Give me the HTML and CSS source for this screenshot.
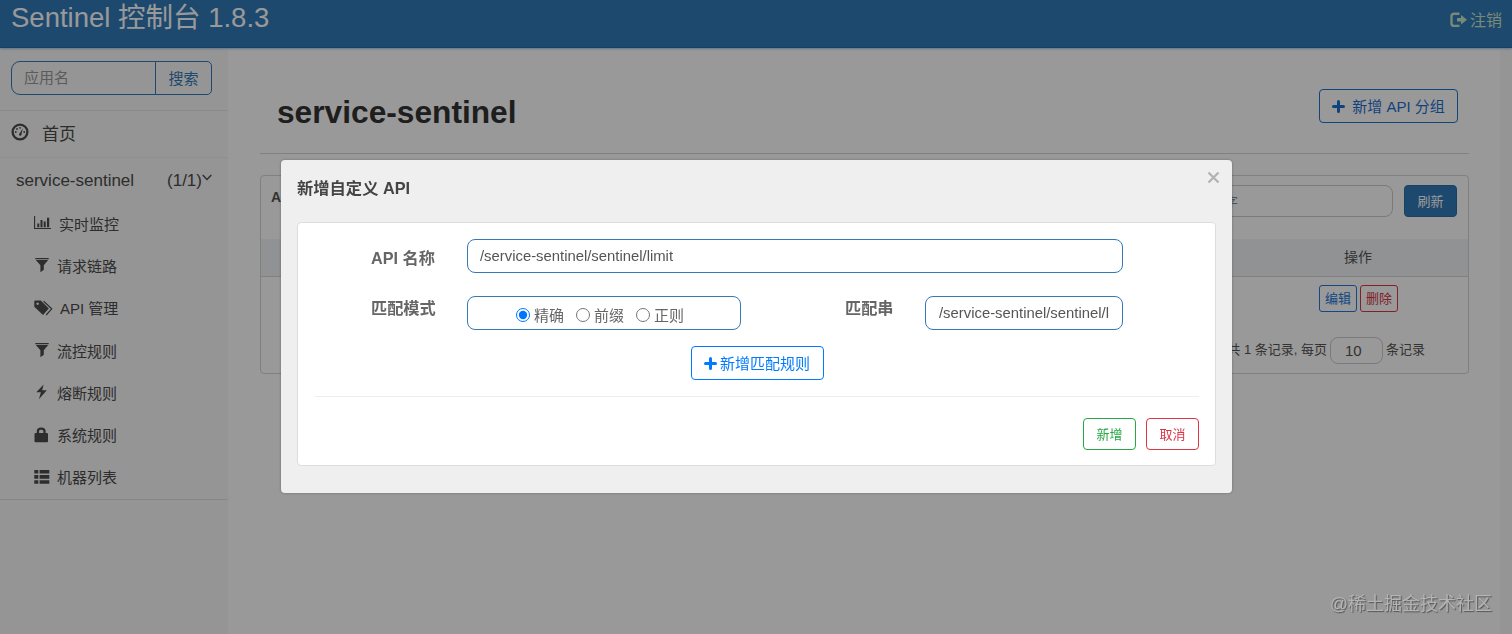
FILE: index.html
```html
<!DOCTYPE html>
<html lang="zh-CN">
<head>
    <meta charset="UTF-8">
    <meta name="viewport" content="width=device-width, initial-scale=1.0">
    <title>Sentinel 控制台</title>
    <link rel="stylesheet" href="styles.css">
</head>
<body>
    <!-- 顶部导航 -->
    <header class="navbar">
        <div class="brand">Sentinel 控制台 1.8.3</div>
        <a class="logout">
            <svg width="17" height="16" viewBox="0 0 17 16"><path d="M9.5 1.7H4.2Q1.5 1.7 1.5 4.4V11.2Q1.5 13.9 4.2 13.9H9.5" fill="none" stroke="currentColor" stroke-width="2.4"/><path d="M7 6h4V3l6 4.8-6 4.8V9.6H7z" fill="currentColor"/></svg>
            <span>注销</span>
        </a>
    </header>

    <div class="page">
        <!-- 左侧菜单 -->
        <aside class="sidebar">
            <div class="search">
                <input class="search-input" type="text" placeholder="应用名">
                <button class="search-btn">搜索</button>
            </div>
            <div class="menu-home">
                <svg width="18" height="18" viewBox="0 0 18 18"><circle cx="9" cy="9" r="7.4" fill="none" stroke="currentColor" stroke-width="2.3"/><path d="M8 11.5L11.8 5.2 10.3 12z" fill="currentColor"/><circle cx="9.2" cy="11.6" r="1.2" fill="currentColor"/><g fill="currentColor"><circle cx="4.8" cy="9" r=".9"/><circle cx="6" cy="6" r=".9"/><circle cx="9" cy="4.8" r=".9"/><circle cx="13.2" cy="9" r=".9"/></g></svg>
                <span>首页</span>
            </div>
            <div class="menu-app">
                <span>service-sentinel</span>
                <span class="count">(1/1)<svg width="10" height="7" viewBox="0 0 10 7"><path d="M.7 1L5 5.4 9.3 1" fill="none" stroke="currentColor" stroke-width="1.4"/></svg></span>
            </div>
            <ul class="menu">
                <li>
                    <svg width="18" height="14" viewBox="0 0 18 14"><path d="M.6 0V12.5H17" fill="none" stroke="currentColor" stroke-width="1.1"/><path d="M3.3 7.500h2v3.800h-2zM6.500 4h2v7.300h-2zM9.700 5.500h2v5.800h-2zM13 1.800h2.200v9.500H13z" fill="currentColor"/></svg>
                    <span>实时监控</span>
                </li>
                <li>
                    <svg width="16" height="16" viewBox="0 0 16 16"><path d="M1.300 1h13.400v1.300H1.300zM1.800 3h12.400L9.800 8.200V12.800L6.400 15.200V8.200z" fill="currentColor"/></svg>
                    <span>请求链路</span>
                </li>
                <li>
                    <svg width="19" height="16" viewBox="0 0 19 16"><path fill-rule="evenodd" d="M.3 1.600Q.3.600 1.300.600H6.800L14.800 8.600 9 15 .3 6.800zM3.600 2.400a1.300 1.300 0 1 0 .01 0z" fill="currentColor"/><path d="M9.600 1.200L17.700 8.800 12.200 15" fill="none" stroke="currentColor" stroke-width="1.200"/></svg>
                    <span>API 管理</span>
                </li>
                <li>
                    <svg width="16" height="16" viewBox="0 0 16 16"><path d="M1.300 1h13.400v1.300H1.300zM1.800 3h12.400L9.800 8.200V12.800L6.400 15.200V8.200z" fill="currentColor"/></svg>
                    <span>流控规则</span>
                </li>
                <li>
                    <svg width="16" height="16" viewBox="0 0 16 16"><path d="M9.600 .5L2.300 8.300H6.900L4.900 15.200 12.800 6.300H8.200z" fill="currentColor"/></svg>
                    <span>熔断规则</span>
                </li>
                <li>
                    <svg width="16" height="16" viewBox="0 0 16 16"><path d="M3.900 7V4.200Q3.900 1.700 7.200 1.700T10.500 4.200V7" fill="none" stroke="currentColor" stroke-width="2.300"/><rect x=".5" y="6" width="13.500" height="9.300" rx="1" fill="currentColor"/></svg>
                    <span>系统规则</span>
                </li>
                <li>
                    <svg width="16" height="16" viewBox="0 0 16 16"><path d="M.3 1h4v3.600h-4zM5.600 1h9.700v3.600H5.600zM.3 6.100h4v3.600h-4zM5.600 6.100h9.700v3.600H5.600zM.3 11.200h4v3.600h-4zM5.600 11.200h9.700v3.600H5.600z" fill="currentColor"/></svg>
                    <span>机器列表</span>
                </li>
            </ul>
        </aside>

        <!-- 右侧内容 -->
        <main class="content">
            <div class="title-bar">
                <h1>service-sentinel</h1>
                <button class="btn btn-add">
                    <svg width="13" height="13" viewBox="0 0 13 13"><path d="M6.500 1.500v10M1.500 6.500h10" stroke="currentColor" stroke-width="3" stroke-linecap="round"/></svg>
                    <span>新增 API 分组</span>
                </button>
            </div>
            <section class="card">
                <div class="card-head">
                    <strong>A</strong>
                    <div class="tools">
                        <input class="keyword" type="text" placeholder="关键字">
                        <button class="btn-refresh">刷新</button>
                    </div>
                </div>
                <div class="table-head"><span>操作</span></div>
                <div class="table-row">
                    <button class="btn-sm blue">编辑</button>
                    <button class="btn-sm red">删除</button>
                </div>
                <div class="pager">
                    <span>共 1 条记录, 每页</span>
                    <input type="text" value="10">
                    <span>条记录</span>
                </div>
            </section>
        </main>
    </div>

    <!-- 弹窗 -->
    <div class="overlay">
        <div class="dialog">
            <div class="dialog-head">
                <span>新增自定义 API</span>
                <svg class="close" width="13" height="13" viewBox="0 0 13 13"><path d="M1.500 1.500l10 10M11.500 1.500l-10 10" stroke="currentColor" stroke-width="2.300"/></svg>
            </div>
            <div class="dialog-body">
                <div class="form-row">
                    <label class="name-label">API 名称</label>
                    <input class="field" type="text" value="/service-sentinel/sentinel/limit">
                </div>
                <div class="form-row match-row">
                    <label>匹配模式</label>
                    <div class="radios">
                        <label><input type="radio" name="mode" checked>精确</label>
                        <label><input type="radio" name="mode">前缀</label>
                        <label><input type="radio" name="mode">正则</label>
                    </div>
                    <label class="pattern-label">匹配串</label>
                    <input class="field pattern" type="text" value="/service-sentinel/sentinel/limit">
                </div>
                <div class="rule-row">
                    <button class="btn btn-rule">
                        <svg width="13" height="13" viewBox="0 0 13 13"><path d="M6.500 1.500v10M1.500 6.500h10" stroke="currentColor" stroke-width="3" stroke-linecap="round"/></svg>
                        <span>新增匹配规则</span>
                    </button>
                </div>
                <div class="dialog-foot">
                    <button class="btn-foot green">新增</button>
                    <button class="btn-foot red">取消</button>
                </div>
            </div>
        </div>
    </div>

    <div class="watermark">@稀土掘金技术社区</div>
</body>
</html>
```
FILE: styles.css
```css
* {
    box-sizing: border-box;
}

body {
    margin: 0;
    height: 634px;
    overflow: hidden;
    background: #f8f8f8;
    color: #555;
    font-family: "Liberation Sans", "Noto Sans CJK SC", sans-serif;
    font-size: 15px;
}

button, input {
    font-family: inherit;
    margin: 0;
}

svg {
    display: block;
    flex: none;
}

/* 顶部导航 */
.navbar {
    display: flex;
    justify-content: space-between;
    height: 48px;
    padding: 0 10px 0 11px;
    background: #337ab7;
    border-bottom: 1px solid #2e6a9e;
    box-shadow: 0 1px 2px #9cc4e6;
    position: relative;
    color: #fff;
}

.brand {
    font-size: 27.5px;
    line-height: 36px;
}

.logout {
    display: flex;
    align-items: center;
    gap: 3px;
    height: 40px;
    font-size: 16px;
    color: #c6e6c6;
}

.logout span {
    margin-top: -2px;
}

.page {
    display: flex;
    height: 586px;
}

/* 左侧菜单 */
.sidebar {
    width: 228px;
    padding-top: 13px;
    color: #4c4c4c;
}

.search {
    display: flex;
    width: 201px;
    height: 34px;
    margin: 0 0 15px 11px;
}

.search-input {
    width: 145px;
    padding: 0 12px 2px;
    border: 1px solid #337ab7;
    border-radius: 9px 0 0 9px;
    background: transparent;
    font-size: 15px;
}

.search-input::placeholder {
    color: #999;
}

.search-btn {
    width: 57px;
    margin-left: -1px;
    padding: 0 0 2px;
    border: 1px solid #337ab7;
    border-radius: 0 5px 5px 0;
    background: transparent;
    color: #337ab7;
    font-size: 15px;
}

.menu-home {
    display: flex;
    align-items: center;
    gap: 13px;
    height: 48px;
    padding-left: 11px;
    border-top: 1px solid #e7e7e7;
    border-bottom: 1px solid #efefef;
    font-size: 17px;
}

.menu-home svg {
    margin-top: -5px;
}

.menu-home span {
    margin-top: -4px;
}

.menu-app {
    display: flex;
    justify-content: space-between;
    height: 45px;
    padding: 0 16px;
    line-height: 45px;
    font-size: 17px;
}

.count {
    display: flex;
}

.count svg {
    margin-top: 16px;
}

.menu {
    margin: 0;
    padding: 0;
    list-style: none;
    border-bottom: 1px solid #dfdfdf;
}

.menu li {
    display: flex;
    align-items: center;
    gap: 7px;
    height: 42.3px;
    padding-left: 34px;
}

.menu svg {
    margin-top: -2px;
}

.menu span {
    margin-top: -2px;
}

/* 右侧内容 */
.content {
    width: 1272px;
    padding: 0 31px 0 32px;
    background: #fff;
}

.title-bar {
    display: flex;
    justify-content: space-between;
    height: 106px;
    padding: 41px 11px 0 17px;
    border-bottom: 1px solid #d8d8d8;
}

.title-bar h1 {
    margin: 4px 0 0;
    font-size: 31.7px;
    line-height: 38px;
    color: #333;
}

.btn {
    display: flex;
    align-items: center;
    justify-content: center;
    height: 34px;
    padding: 0;
    border: 1px solid #007bff;
    border-radius: 4px;
    background: transparent;
    color: #007bff;
    font-size: 15px;
}

.btn span {
    margin-top: -2px;
}

.btn-add {
    width: 139px;
    gap: 7px;
    border-color: #1f74c9;
    color: #1f6fd0;
}

.card {
    height: 199px;
    margin-top: 21px;
    border: 1px solid #d6d6d6;
    border-radius: 4px;
}

.card-head {
    display: flex;
    justify-content: space-between;
    height: 63px;
    padding: 9px 11px 0 10px;
}

.card-head strong {
    line-height: 25px;
    font-size: 14px;
}

.tools {
    display: flex;
    gap: 11px;
}

.keyword {
    width: 208px;
    height: 32px;
    padding: 0 13px;
    border: 1px solid #ccc;
    border-radius: 8px;
    font-size: 13px;
}

.keyword::placeholder {
    color: #888;
}

.btn-refresh {
    width: 53px;
    height: 32px;
    padding: 0 0 2px;
    border: 1px solid #2e6da4;
    border-radius: 4px;
    background: #337ab7;
    color: #fff;
    font-size: 13px;
}

.table-head {
    display: flex;
    justify-content: flex-end;
    height: 38px;
    padding-right: 96px;
    background: #f0f4f7;
    border-bottom: 1px solid #d8d8d8;
    font-size: 14px;
    line-height: 37px;
}

.table-row {
    display: flex;
    justify-content: flex-end;
    gap: 3px;
    height: 60px;
    padding: 8px 70px 0 0;
}

.btn-sm {
    width: 38px;
    height: 27px;
    padding: 0 0 2px;
    border: 1px solid;
    border-radius: 3px;
    background: transparent;
    font-size: 13px;
}

.blue {
    border-color: #2277dd;
    color: #2277dd;
}

.green {
    border-color: #28a745;
    color: #28a745;
}

.red {
    border-color: #dc3545;
    color: #dc3545;
}

.pager {
    display: flex;
    justify-content: flex-end;
    align-items: center;
    gap: 3px;
    height: 27px;
    padding-right: 43px;
    font-size: 13px;
}

.pager span {
    margin-top: -4px;
}

.pager input {
    width: 53px;
    height: 27px;
    padding: 0 14px 1px;
    border: 1px solid #ccc;
    border-radius: 8px;
    color: #555;
    font-size: 15px;
}

/* 弹窗 */
.overlay {
    position: fixed;
    inset: 0;
    padding: 160px 0 0 281px;
    background: rgba(0, 0, 0, 0.4);
}

.dialog {
    width: 951px;
    height: 333px;
    padding: 0 16px;
    border-radius: 4px;
    background: #efefef;
    box-shadow: 0 0 3px rgba(0, 0, 0, 0.3);
}

.dialog-head {
    display: flex;
    justify-content: space-between;
    height: 62px;
    line-height: 57px;
    font-size: 16.3px;
    font-weight: bold;
    color: #444;
}

.close {
    margin: 11px -4px 0 0;
    color: #b3b3b3;
}

.dialog-body {
    height: 244px;
    padding: 16px 16px 0 17px;
    border: 1px solid #ddd;
    border-radius: 4px;
    background: #fff;
    color: #666;
}

.form-row {
    display: flex;
    height: 34px;
    padding-left: 56px;
}

.form-row > label {
    width: 96px;
    font-size: 16.2px;
    font-weight: bold;
    line-height: 25px;
}

.form-row > .name-label {
    line-height: 38px;
}

.field {
    width: 656px;
    height: 34px;
    padding: 0 12px;
    border: 1px solid #337ab7;
    border-radius: 8px;
    background: #fff;
    color: #555;
    font-size: 14.85px;
}

.match-row {
    margin-top: 23px;
}

.radios {
    display: flex;
    gap: 12px;
    width: 274px;
    height: 34px;
    padding: 3px 0 0 48px;
    border: 1px solid #337ab7;
    border-radius: 8px;
}

.radios label {
    display: flex;
    align-items: center;
    gap: 4px;
}

.radios input {
    width: 14px;
    height: 14px;
    margin-top: 0;
}

.form-row > .pattern-label {
    width: 80px;
    margin-left: 104px;
}

.pattern {
    width: 198px;
    padding: 0 13px;
}

.rule-row {
    display: flex;
    justify-content: center;
    height: 67px;
    padding-top: 16px;
    border-bottom: 1px solid #eee;
}

.btn-rule {
    width: 133px;
    gap: 3px;
}

.dialog-foot {
    display: flex;
    justify-content: flex-end;
    gap: 10px;
    padding-top: 21px;
}

.btn-foot {
    width: 53px;
    height: 32px;
    padding: 0 0 2px;
    border: 1px solid;
    border-radius: 4px;
    background: #fff;
    font-size: 13px;
}

/* 水印 */
.watermark {
    position: fixed;
    right: 20px;
    bottom: 17px;
    color: #b4b4b4;
    font-size: 18px;
    line-height: 26px;
    text-shadow: 1px 1px 1px #555;
}
```
